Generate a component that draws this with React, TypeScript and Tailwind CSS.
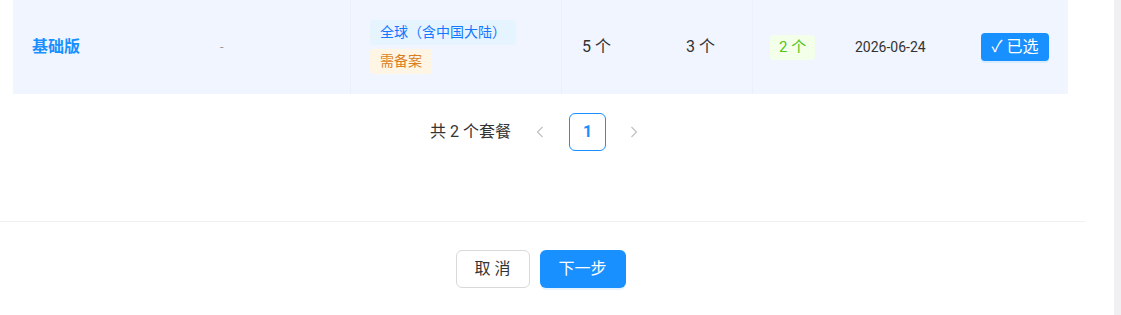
import React from "react";

export default function App() {
  return (
    <div
      className="flex w-[1121px] h-[315px] bg-white overflow-hidden text-[#333]"
      style={{ fontFamily: "Roboto, 'Noto Sans CJK SC', 'Noto Sans', sans-serif" }}
    >
      <div className="w-[1114px] flex flex-col">
        <div className="pl-[13px]">
          <div className="flex w-[1055px] h-[94px] bg-[#f0f5ff] items-center">
            <div className="w-[187px] pl-[19px] text-[16px] font-bold text-[#1890ff]">基础版</div>
            <div className="w-[150px] pl-[20px] text-[13px] text-[#999]">-</div>
            <div className="w-[211px] h-full pl-[19px] border-l border-[#ebf1fc] flex flex-col justify-center items-start gap-[4px]">
              <span className="h-[25px] px-[10px] rounded-[4px] bg-[#e6f4ff] text-[#1677ff] text-[14px] flex items-center">全球（含中国大陆）</span>
              <span className="h-[25px] px-[10px] rounded-[4px] bg-[#fff5e4] text-[#d97f1e] text-[14px] flex items-center">需备案</span>
            </div>
            <div className="w-[105px] h-full pl-[20px] border-l border-[#ebf1fc] flex items-center text-[16px] text-[#333]">5 个</div>
            <div className="w-[86px] pl-[20px] text-[16px] text-[#333]">3 个</div>
            <div className="w-[83px] h-full pl-[17px] border-l border-[#ebf1fc] flex items-center">
              <span className="h-[25px] px-[9px] rounded-[4px] bg-[#f4ffea] text-[#52c41a] text-[15px] flex items-center">2 个</span>
            </div>
            <div className="w-[125px] pl-[20px] text-[14px] text-[#333]">2026-06-24</div>
            <div className="flex-1 pl-[21px]">
              <button className="h-[28px] w-[68px] rounded-[4px] bg-[#1890ff] text-white text-[16px] flex items-center justify-center gap-[4px] shadow-[0_2px_0_rgba(5,145,255,0.1)]">
                <span>✓</span>
                <span>已选</span>
              </button>
            </div>
          </div>
        </div>

        <div className="w-[1069px] flex justify-center items-center mt-[19px] h-[38px] text-[16px]">
          <span className="mr-[24px] text-[#333]">共 2 个套餐</span>
          <span className="w-[10px] mr-[24px] flex justify-center">
            <svg width="8" height="12" viewBox="0 0 8 12"><path d="M6.5 1 L1.5 6 L6.5 11" fill="none" stroke="#c0c0c0" strokeWidth="1.2" /></svg>
          </span>
          <span className="w-[37px] h-[38px] rounded-[6px] border border-[#1890ff] text-[#1890ff] font-bold text-[16px] flex items-center justify-center">1</span>
          <span className="w-[10px] ml-[23px] flex justify-center">
            <svg width="8" height="12" viewBox="0 0 8 12"><path d="M1.5 1 L6.5 6 L1.5 11" fill="none" stroke="#c0c0c0" strokeWidth="1.2" /></svg>
          </span>
        </div>

        <div className="w-[1085px] h-px bg-[#f0f0f0] mt-[70px]" />

        <div className="w-[1081px] flex justify-center gap-[10px] mt-[28px]">
          <button className="w-[74px] h-[38px] rounded-[6px] border border-[#d9d9d9] bg-white text-[16px] text-[#333] tracking-[4px] pl-[4px]">取消</button>
          <button className="w-[86px] h-[38px] rounded-[6px] bg-[#1890ff] text-white text-[16px] shadow-[0_2px_0_rgba(5,145,255,0.1)]">下一步</button>
        </div>
      </div>
      <div className="w-[7px] h-full bg-[#f0f0f3]" />
    </div>
  );
}
